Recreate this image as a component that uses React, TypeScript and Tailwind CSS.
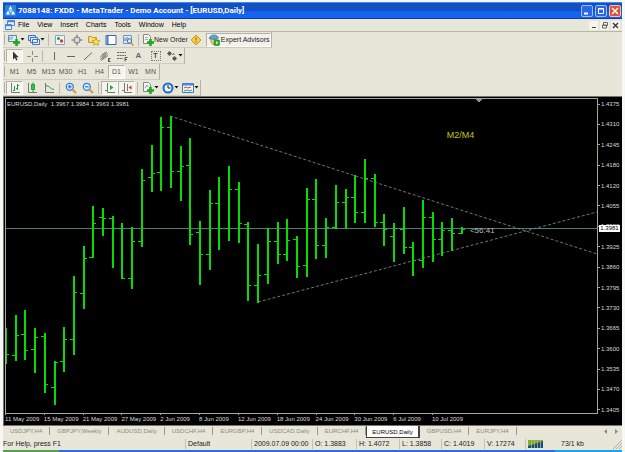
import type { ReactNode } from 'react';

// [high, low, open, close]
const BARS = [
  [328, 364, 354, 354], [315, 361, 355, 335], [310, 360, 334, 350], [328, 373, 349, 337],
  [333, 393, 336, 384], [361, 405, 387, 362], [327, 372, 361, 339], [276, 355, 339, 292],
  [246, 309, 293, 258], [206, 258, 257, 223], [208, 236, 217, 218], [216, 268, 218, 228],
  [223, 279, 228, 278], [227, 289, 278, 241], [169, 247, 241, 180], [145, 192, 177, 173],
  [117, 191, 172, 127], [116, 188, 127, 171], [146, 201, 171, 166], [138, 245, 165, 234],
  [221, 285, 232, 254], [190, 270, 254, 203], [177, 250, 203, 228], [166, 241, 228, 189],
  [182, 243, 189, 223], [222, 301, 224, 285], [244, 303, 285, 275], [228, 284, 274, 241],
  [222, 264, 241, 254], [219, 261, 254, 240], [236, 278, 239, 266], [188, 277, 265, 199],
  [179, 259, 199, 245], [218, 258, 245, 227], [185, 229, 227, 202], [189, 229, 202, 197],
  [175, 223, 197, 212], [159, 223, 212, 178], [174, 227, 178, 222], [214, 246, 222, 229],
  [223, 262, 236, 228], [207, 254, 229, 247], [242, 276, 247, 260], [200, 268, 260, 217],
  [212, 262, 217, 239], [222, 256, 239, 230], [218, 251, 230, 233], [227, 234, 233, 229],
];

const PRICES = [
  '1.4375', '1.4310', '1.4245', '1.4180', '1.4120', '1.4055', '1.3990', '1.3925',
  '1.3860', '1.3795', '1.3730', '1.3665', '1.3600', '1.3535', '1.3470', '1.3405',
];

const DATES = [
  '11 May 2009', '15 May 2009', '21 May 2009', '27 May 2009', '2 Jun 2009', '8 Jun 2009',
  '12 Jun 2009', '18 Jun 2009', '24 Jun 2009', '30 Jun 2009', '6 Jul 2009', '10 Jul 2009',
];

const MENU = ['File', 'View', 'Insert', 'Charts', 'Tools', 'Window', 'Help'];
const PERIODS = ['M1', 'M5', 'M15', 'M30', 'H1', 'H4', 'D1', 'W1', 'MN'];

const TABS = [
  'USDJPY,H4', 'GBPJPY,Weekly', 'AUDUSD,Daily', 'USDCHF,H4', 'EURGBP,H4',
  'USDCAD,Daily', 'EURCHF,H4', 'EURUSD,Daily', 'GBPUSD,H4', 'EURJPY,H4',
];

const Icon = ({ children }: { children: ReactNode }) => (
  <svg viewBox="0 0 12 12" className="h-3 w-3 shrink-0" fill="none" stroke="#666" strokeWidth="1">
    {children}
  </svg>
);

const PlusBadge = () => (
  <path d="M8.500 5v7M5 8.500h7" stroke="#1fa81f" strokeWidth="2.600" />
);

const Caret = () => (
  <svg viewBox="0 0 5 3" className="h-[3px] w-[5px] shrink-0" fill="#111">
    <path d="M.5 0h4L2.500 2.500z" />
  </svg>
);

const Tool = ({ label, on, caret, children }: { label: string; on?: boolean; caret?: boolean; children: ReactNode }) => (
  <button
    aria-label={label}
    className={`flex h-[14px] shrink-0 items-center justify-center ${caret ? 'w-[20px]' : 'w-[17px]'} ${
      on ? 'border border-[#b4b2a4] border-r-white border-b-white bg-[#f4f3ec]' : ''
    }`}
  >
    <Icon>{children}</Icon>
    {caret && <Caret />}
  </button>
);

const Sep = () => <span className="mx-[2px] h-3 w-px shrink-0 bg-[#bcbaac]" />;

const Toolbar = ({ label, children }: { label: string; children: ReactNode }) => (
  <div role="toolbar" aria-label={label} className="flex h-4 w-fit items-center border-r border-b border-r-[#b4b2a4] border-b-[#cfcdbf] pl-px">
    <span className="mr-px h-[11px] w-px bg-[#b4b2a4]" />
    {children}
  </div>
);

const TitleBar = () => (
  <header className="flex h-[17px] items-center border-t border-b border-t-[#3c8cf4] border-b-[#0a38b0] bg-linear-to-b from-[#1450c4] from-50% to-[#1464f0] to-60% pr-px pl-[2px]">
    <svg viewBox="0 0 11 11" className="h-[11px] w-[11px] shrink-0">
      <rect width="11" height="11" rx="1" fill="#2a84d8" />
      <path d="M5.500 1L7.500 4.500h-4zM3 5.500L5 9.500H1zM8 5.500L10 9.500H6z" fill="#fff" />
      <path d="M3.500 5h4L5.500 8.500z" fill="#9fd0ff" />
    </svg>
    <h1 className="ml-[2px] flex-1 font-[Roboto,sans-serif] text-[8px] leading-[14px] font-bold whitespace-nowrap text-white">
      7088148: FXDD - MetaTrader - Demo Account - [EURUSD,Daily]
    </h1>
    <div className="flex gap-[2px]">
      <button aria-label="Minimize" className="h-3 w-3 rounded-xs border border-[#9cc0fa] bg-[#2c66e4]">
        <svg viewBox="0 0 10 10" className="h-[10px] w-[10px]"><path d="M2 7.500h4" stroke="#fff" strokeWidth="2" /></svg>
      </button>
      <button aria-label="Maximize" className="h-3 w-3 rounded-xs border border-[#9cc0fa] bg-[#2c66e4]">
        <svg viewBox="0 0 10 10" className="h-[10px] w-[10px]"><path d="M2.500 2.500h5v5h-5zM2 3h6" fill="none" stroke="#fff" /></svg>
      </button>
      <button aria-label="Close" className="h-3 w-3 rounded-xs border border-[#f4c0b0] bg-[#e0502c]">
        <svg viewBox="0 0 10 10" className="h-[10px] w-[10px]"><path d="M2 2l6 6M8 2l-6 6" stroke="#fff" strokeWidth="1.500" /></svg>
      </button>
    </div>
  </header>
);

const MenuBar = () => (
  <nav className="flex h-[13px] items-center border-b border-[#b8b6a8] pr-[2px] pl-[2px]">
    <svg viewBox="0 0 10 10" className="h-[10px] w-[10px]" fill="#e8f0fc" stroke="#4a86d8">
      <path d="M2.500 .5h7v5h-7zM.5 4.500h6v5h-6z" />
      <path d="M.5 5.500h6M2.500 1.500h7" strokeWidth="1.500" />
    </svg>
    <div className="ml-[3px] flex flex-1 gap-2">
      {MENU.map((item) => (
        <button key={item} className="text-[7px] leading-[10px] text-black">{item}</button>
      ))}
    </div>
    <div className="flex gap-[2px]">
      <button aria-label="Minimize chart" className="h-[9px] w-[9px] bg-[#f4f3ec]">
        <svg viewBox="0 0 9 9"><path d="M3 6.500h4" stroke="#444" /></svg>
      </button>
      <button aria-label="Restore chart" className="h-[9px] w-[9px] bg-[#f4f3ec]">
        <svg viewBox="0 0 9 9" fill="none" stroke="#666"><path d="M3.500 1.500h4v3h-4zM2.500 4h4v3h-4z" /></svg>
      </button>
      <button aria-label="Close chart" className="h-[9px] w-[9px] bg-[#f4f3ec]">
        <svg viewBox="0 0 9 9"><path d="M2 2l5 5M7 2l-5 5" stroke="#333" strokeWidth="1.300" /></svg>
      </button>
    </div>
  </nav>
);

const StandardToolbar = () => (
  <Toolbar label="Standard">
    <Tool label="New chart" caret>
      <path d="M.5 1.500h8v6h-8z" fill="#dfeaf8" stroke="#5a86b8" />
      <path d="M2 3v3M4 2.500v3" stroke="#4a9" />
      <PlusBadge />
    </Tool>
    <Tool label="Profiles" caret>
      <path d="M.5 1.500h7v5h-7z" fill="#cfe0f8" stroke="#3f74c0" />
      <path d="M2.500 3.500h7v5h-7zM4.500 5.500h7v5h-7z" fill="#e8f2ff" stroke="#3f74c0" />
    </Tool>
    <Sep />
    <Tool label="Market watch">
      <path d="M1.500 1.500h9v9h-9z" fill="#eef4fc" stroke="#88a4cc" />
      <circle cx="4.500" cy="4.500" r="1.500" fill="#2a9c3c" stroke="none" />
      <circle cx="7.500" cy="7" r="1.700" fill="#d8402c" stroke="none" />
    </Tool>
    <Tool label="Data window">
      <circle cx="6" cy="6" r="3.200" stroke="#777" />
      <path d="M6 .5v4M6 7.500v4M.5 6h4M7.500 6h4" stroke="#777" />
    </Tool>
    <Tool label="Navigator">
      <path d="M.5 2.500h3l1 1h4v5h-8z" fill="#f8dc78" stroke="#c8962c" />
      <path d="M8 4l1.200 2.500 2.600.3-2 1.700.6 2.800L8 10l-2.400 1.300.6-2.800-2-1.700 2.600-.3z" fill="#fce84c" stroke="#b88a20" strokeWidth=".7" />
    </Tool>
    <Tool label="Terminal">
      <path d="M1 1.500h10v9H1z" fill="#fff" stroke="#3468b8" />
      <path d="M2.500 2v8" stroke="#4a80d0" strokeWidth="2" />
    </Tool>
    <Tool label="Strategy tester">
      <path d="M1.500 1.500h8v8h-8z" fill="#dfeaf8" stroke="#6c94cc" />
      <path d="M3 7V4M5 7V3M7 6V4" stroke="#4a74b0" />
      <circle cx="7.500" cy="7" r="2.200" fill="#cfe4fa" stroke="#4878a8" />
      <path d="M9 9l2.500 2.500" stroke="#c89a30" strokeWidth="1.500" />
    </Tool>
    <Sep />
    <button className="flex h-[14px] shrink-0 items-center pl-px text-[7px] leading-[14px] whitespace-nowrap text-[#222]">
      <Icon>
        <path d="M1.500.5h5l2 2v7h-7z" fill="#f4f4f4" stroke="#888" />
        <path d="M3 3.500h3M3 5.500h3" stroke="#aaa" />
        <PlusBadge />
      </Icon>
      <span className="pt-px">New Order</span>
    </button>
    <Tool label="Alerts">
      <path d="M6 1.200L10.800 6 6 10.800 1.200 6z" fill="#fbd23c" stroke="#c08a18" />
      <path d="M6 3.500v3M6 7.500v1" stroke="#7a5400" />
    </Tool>
    <button className="ml-px flex h-[14px] shrink-0 items-center gap-px border border-[#b4b2a4] border-r-white border-b-white bg-[#f2f1ea] px-px text-[7px] leading-[12px] whitespace-nowrap text-[#222]">
      <Icon>
        <path d="M2.500 5h6l-1 4-2 1.500-2-1.500z" fill="#f8d468" stroke="#b89038" />
        <path d="M1 4.500C2 1.500 4 1 6 1s4 1 4.500 3L8 5.500z" fill="#5ca0dc" stroke="#3c78b0" strokeWidth=".7" />
        <rect x="6" y="6" width="5.500" height="5.500" rx="1" fill="#28b030" stroke="#188020" strokeWidth=".6" />
        <path d="M8 7.200l2.200 1.500L8 10.300z" fill="#fff" stroke="none" />
      </Icon>
      <span className="pt-px">Expert Advisors</span>
    </button>
  </Toolbar>
);

const DrawingToolbar = () => (
  <Toolbar label="Line studies">
    <Tool label="Cursor" on>
      <path d="M4 1.500v8l2-1.700 1.200 2.700 1.300-.6-1.200-2.600h2.400z" fill="#333" stroke="none" />
    </Tool>
    <Tool label="Crosshair">
      <path d="M6.500 1v4M6.500 8v4M1 6.500h4M8 6.500h4" stroke="#888" />
    </Tool>
    <Sep />
    <Tool label="Vertical line"><path d="M6.500 2v8" /></Tool>
    <Tool label="Horizontal line"><path d="M2 6.500h8" /></Tool>
    <Tool label="Trendline"><path d="M2 10l8-7.500" /></Tool>
    <Tool label="Equidistant channel">
      <path d="M1 7l7-5M1 9.500l8-6M2 10.500l7-5M4 3v6M6 2v6" strokeWidth=".8" />
      <path d="M11.500 8.500h-2v3h2M9.500 10h1.500" stroke="#333" strokeWidth=".8" />
    </Tool>
    <Tool label="Fibonacci retracement">
      <path d="M1 2.500h9M1 5.500h9M1 8.500h6" strokeDasharray="2 .6" />
      <path d="M9 11.500v-4h2.500M9 9.500h2" stroke="#333" strokeWidth=".8" />
    </Tool>
    <button aria-label="Text" className="h-[14px] w-[17px] text-[8px] leading-[14px] font-bold text-[#666]">A</button>
    <button aria-label="Text label" className="flex h-[14px] w-[17px] items-center justify-center">
      <span className="h-[10px] w-[10px] border border-dotted border-[#777] text-[7px] leading-[8px] font-bold text-[#444]">T</span>
    </button>
    <Tool label="Arrows" caret>
      <path d="M3.500 1L6 3.500 3.500 6 1 3.500zM8.500 6L11 8.500 8.500 11 6 8.500z" fill="#555" stroke="none" />
      <path d="M6 5l2-2M8 3.500V5" stroke="#777" />
    </Tool>
  </Toolbar>
);

const PeriodToolbar = () => (
  <Toolbar label="Periodicity">
    {PERIODS.map((p) => (
      <button
        key={p}
        aria-pressed={p === 'D1'}
        className={`flex h-[14px] w-[17px] items-center justify-center text-[7px] leading-[12px] text-[#555] ${
          p === 'D1' ? 'border border-[#b4b2a4] border-r-white border-b-white bg-[#f4f3ec]' : ''
        }`}
      >
        {p}
      </button>
    ))}
  </Toolbar>
);

const ChartToolbar = () => (
  <Toolbar label="Charts">
    <Tool label="Bar chart" on>
      <path d="M2.500 1v9.500H11" stroke="#777" />
      <path d="M5.500 4v5M4 8.500h1.500M8.500 2v6M8.500 3.500H10M7 6.500h1.500" stroke="#1f9c3c" />
    </Tool>
    <Tool label="Candlesticks">
      <path d="M2.500 1v9.500H11" stroke="#777" />
      <path d="M7 .5v10" stroke="#1f9c3c" />
      <path d="M5.500 2.500h3v5h-3z" fill="#2cc84c" stroke="#1f9c3c" />
    </Tool>
    <Tool label="Line chart">
      <path d="M2.500 1v9.500H11" stroke="#777" />
      <path d="M3 4c3-1 4 3 8 3.500" stroke="#1f9c3c" />
    </Tool>
    <Sep />
    <Tool label="Zoom in">
      <circle cx="4.800" cy="4.800" r="3.500" fill="#d8ecff" stroke="#3a80d0" strokeWidth="1.300" />
      <path d="M3 4.800h3.600M4.800 3v3.600" stroke="#2060b8" />
      <path d="M7.500 7.500l3.500 3.500" stroke="#c8a038" strokeWidth="2" />
    </Tool>
    <Tool label="Zoom out">
      <circle cx="4.800" cy="4.800" r="3.500" fill="#d8ecff" stroke="#3a80d0" strokeWidth="1.300" />
      <path d="M3 4.800h3.600" stroke="#2060b8" />
      <path d="M7.500 7.500l3.500 3.500" stroke="#c8a038" strokeWidth="2" />
    </Tool>
    <Sep />
    <Tool label="Auto scroll" on>
      <path d="M3.500 1v9.500H11M1 8.500h2" stroke="#777" />
      <path d="M6 3l3.500 2.500L6 8z" fill="#1fa83c" stroke="none" />
    </Tool>
    <Tool label="Chart shift" on>
      <path d="M3.500 1v9.500H11M6.500 2v7M1 8.500h2" stroke="#777" />
      <path d="M10.500 3.500L7.500 5.500 10.500 7.500z" fill="#c83c24" stroke="none" />
    </Tool>
    <Sep />
    <Tool label="Indicators" caret>
      <path d="M1.500.5h5l2 2v7h-7z" fill="#f4f4f4" stroke="#888" />
      <path d="M3 6l2-3 1 2" stroke="#999" />
      <PlusBadge />
    </Tool>
    <Tool label="Periods" caret>
      <circle cx="6" cy="6" r="4.500" fill="#e8f4ff" stroke="#2468c8" strokeWidth="2" />
      <path d="M6 3v3h2.500" stroke="#222" />
    </Tool>
    <Tool label="Templates" caret>
      <path d="M.5 1.500h11v9H.5z" fill="#eef6ff" stroke="#4478b8" />
      <path d="M1 2.500h10" stroke="#4a88d8" strokeWidth="2" />
      <path d="M2 6l2-1 2 1 3-1" stroke="#c84c30" />
      <path d="M2 9l3-1 2 1 3-1" stroke="#3a9c48" />
    </Tool>
  </Toolbar>
);

const Chart = () => (
  <main className="border-t border-l border-[#77756a] bg-black pt-px pl-px text-[6px] leading-[8px] text-[#d8d8d8]">
    <div className="flex h-[316px]">
      <div className="relative min-w-0 flex-1">
        <svg
          viewBox="5 98 593 316"
          preserveAspectRatio="none"
          className="h-full w-full"
          fill="none"
          shapeRendering="crispEdges"
        >
          <path d="M5 228.500h593" stroke="#4c7c80" />
          <path d="M170 116L597 254M258 302L597 212" stroke="#909090" strokeDasharray="3 2" shapeRendering="auto" strokeWidth=".8" />
          {BARS.map(([high, low, open, close], i) => {
            const x = Math.round(5 + i * 9.7);
            return (
              <g key={i} fill="#04dc04">
                <rect x={x} y={high} width={i % 3 === 1 ? 2 : 1.5} height={low - high} />
                {i > 0 && <rect x={x - 3} y={open} width="3" height="1" />}
                <rect x={x + 1} y={close} width="3" height="1" />
              </g>
            );
          })}
          <path d="M475 99h7l-3.500 3.500z" fill="#8898a0" />
          <path d="M5.500 98v315.500h592V98.500H5" stroke="#a8a69c" />
        </svg>
        <span className="absolute top-[2px] left-[2px] whitespace-pre">EURUSD,Daily  1.3967 1.3984 1.3963 1.3981</span>
        <span className="absolute top-[31px] left-[74.500%] text-[9px] leading-[12px] text-[#c8c814]">M2/M4</span>
        <span className="absolute top-[128px] left-[78.400%] text-[8px] leading-[10px] text-[#b8b8b8]">&lt;56:41</span>
      </div>
      <div className="relative flex w-[24px] shrink-0 flex-col justify-between pt-[2px]">
        {PRICES.map((p) => (
          <div key={p} className="flex items-center gap-px">
            <span className="h-px w-[2px] bg-[#a8a69c]" />
            {p}
          </div>
        ))}
        <span className="absolute top-[127px] left-px w-[21px] bg-white text-center leading-[7px] text-black">1.3981</span>
      </div>
    </div>
    <div className="grid h-[11px] w-[75.500%] grid-cols-12">
      {DATES.map((d) => (
        <div key={d} className="whitespace-nowrap">
          <span className="block h-px w-px bg-[#a8a69c]" />
          {d}
        </div>
      ))}
    </div>
  </main>
);

const ChartTabs = () => (
  <div role="tablist" className="flex h-[13px] items-start border-t border-[#77756a] text-[6px]">
    {TABS.map((t) => (
      <button
        key={t}
        role="tab"
        aria-selected={t === 'EURUSD,Daily'}
        className={`whitespace-nowrap ${
          t === 'EURUSD,Daily'
            ? 'h-3 border-r-2 border-b border-l border-[#444] bg-white px-[5px] leading-[10px] text-black'
            : 'my-px h-2 border-r border-[#9a988c] px-[7px] leading-[8px] text-[#8c8a7e]'
        }`}
      >
        {t}
      </button>
    ))}
    <div className="ml-auto flex gap-[6px] pt-[3px] pr-1">
      <button aria-label="Scroll left" className="flex"><svg viewBox="0 0 4 5" className="h-[5px] w-1"><path d="M3 0v5L0 2.500z" fill="#8c8a7e" /></svg></button>
      <button aria-label="Scroll right" className="flex"><svg viewBox="0 0 4 5" className="h-[5px] w-1"><path d="M1 0v5l3-2.500z" fill="#8c8a7e" /></svg></button>
    </div>
  </div>
);

const StatusBar = () => (
  <footer className="flex h-3 items-center text-[7px] leading-[10px] whitespace-nowrap text-[#222]">
    <span className="flex-1">For Help, press F1</span>
    <span className="w-[66px] border-l border-[#c4c2b4] pl-[2px]">Default</span>
    <span className="w-[61px] border-l border-[#c4c2b4] pl-[2px]">2009.07.09 00:00</span>
    <span className="w-[44px] border-l border-[#c4c2b4] pl-[2px]">O: 1.3883</span>
    <span className="w-[43px] border-l border-[#c4c2b4] pl-[2px]">H: 1.4072</span>
    <span className="w-[42px] border-l border-[#c4c2b4] pl-[2px]">L: 1.3858</span>
    <span className="w-[43px] border-l border-[#c4c2b4] pl-[2px]">C: 1.4019</span>
    <span className="w-[41px] border-l border-[#c4c2b4] pl-[2px]">V: 17274</span>
    <span className="flex w-[97px] items-center border-l border-[#c4c2b4] pl-[2px]">
      <svg viewBox="0 0 15 8" className="h-2 w-[15px]">
        <rect width="15" height="8" fill="#88a830" />
        <path d="M0 8V6l15-5v7z" fill="#1c4c80" />
        <path d="M3.500 0v8M6.500 0v8M9.500 0v8M12.500 0v8" stroke="#b8cc70" strokeWidth=".7" />
      </svg>
      <span className="flex-1 pl-[18px]">73/1 kb</span>
      <svg viewBox="0 0 9 9" className="h-[9px] w-[9px] self-end" stroke="#b4b2a4">
        <path d="M0 9l9-9M3 9l6-6M6 9l3-3" />
      </svg>
    </span>
  </footer>
);

export default function App() {
  return (
    <div className="bg-[#f6f8f6] pt-[2px] pr-[3px] pl-[3px] font-['Liberation_Sans',Arial,sans-serif]">
      <div className="bg-[#e7e6d9]">
        <TitleBar />
        <MenuBar />
        <StandardToolbar />
        <DrawingToolbar />
        <PeriodToolbar />
        <ChartToolbar />
        <Chart />
        <ChartTabs />
        <StatusBar />
        <div className="flex h-[2px] bg-[#2c70e0]">
          <span className="w-[56px] bg-[#4ca44c]" />
          <span className="ml-auto w-[67px] bg-[#18a4ec]" />
        </div>
      </div>
    </div>
  );
}
